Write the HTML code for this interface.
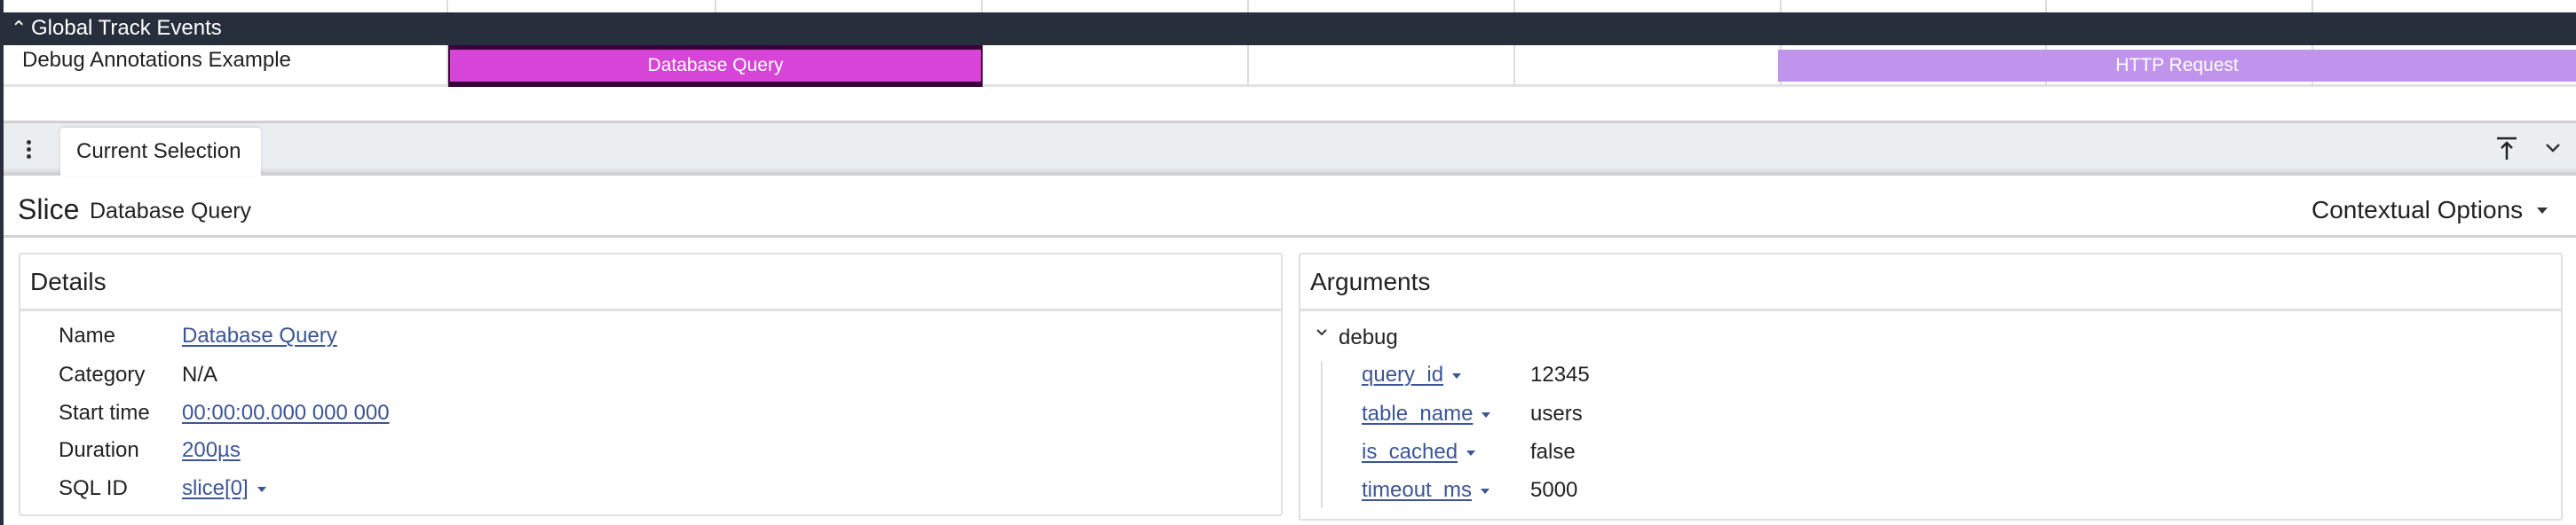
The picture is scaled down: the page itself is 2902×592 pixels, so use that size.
<!DOCTYPE html>
<html><head><meta charset="utf-8"><style>
*{margin:0;padding:0;box-sizing:border-box}
body{width:2902px;height:592px;position:relative;background:#fff;font-family:"Liberation Sans",sans-serif;color:#222;overflow:hidden}
.a{position:absolute;white-space:nowrap}
.gl{position:absolute;width:2px;background:#ddd}
.lk{color:#3b5596;text-decoration:underline;text-decoration-thickness:2px;text-underline-offset:3px}
.tri{display:inline-block;width:0;height:0;border-left:5px solid transparent;border-right:5px solid transparent;border-top:6px solid #3b5596;vertical-align:middle;margin-left:10px}
.lbl{font-size:24px;line-height:30px}
</style></head><body>
<div class="a" style="left:0;top:0;width:4px;height:592px;background:#282f3c"></div>
<!-- grid lines top row -->
<div class="gl" style="left:503px;top:0;height:14px"></div><div class="gl" style="left:805px;top:0;height:14px"></div><div class="gl" style="left:1105px;top:0;height:14px"></div><div class="gl" style="left:1405px;top:0;height:14px"></div><div class="gl" style="left:1705px;top:0;height:14px"></div><div class="gl" style="left:2005px;top:0;height:14px"></div><div class="gl" style="left:2304px;top:0;height:14px"></div><div class="gl" style="left:2604px;top:0;height:14px"></div>
<!-- header -->
<div class="a" style="left:0;top:14px;width:2902px;height:37px;background:#282f3c"></div>
<div class="a" style="left:12px;top:16px;color:#fff;font-size:22px;line-height:32px">&#8963;</div>
<div class="a" style="left:35px;top:17px;color:#fff;font-size:24px;line-height:30px">Global Track Events</div>
<!-- track row -->
<div class="a" style="left:4px;top:51px;width:2898px;height:47px;background:#fff;border-bottom:3px solid #e2e2e2"></div>
<div class="gl" style="left:503px;top:51px;height:46px"></div><div class="gl" style="left:805px;top:51px;height:46px"></div><div class="gl" style="left:1105px;top:51px;height:46px"></div><div class="gl" style="left:1405px;top:51px;height:46px"></div><div class="gl" style="left:1705px;top:51px;height:46px"></div><div class="gl" style="left:2005px;top:51px;height:46px"></div><div class="gl" style="left:2304px;top:51px;height:46px"></div><div class="gl" style="left:2604px;top:51px;height:46px"></div>
<div class="a" style="left:25px;top:53px;font-size:24px;line-height:30px;color:#222">Debug Annotations Example</div>
<div class="a" style="left:505px;top:51px;width:602px;height:47px;background:#d744d8;border:solid #3a003a;border-width:5px 2px 6px 2px;color:#fff;font-size:21px;text-align:center;line-height:36px">Database Query</div>
<div class="a" style="left:2003px;top:56px;width:899px;height:36px;background:#c093ec;color:#fff;font-size:21px;text-align:center;line-height:36px">HTTP Request</div>
<!-- toolbar -->
<div class="a" style="left:4px;top:136px;width:2898px;height:62px;background:#ebeef0;border-top:3px solid #d0d0d0;border-bottom:3px solid #cfcfcf;box-shadow:inset 0 -6px 6px -4px rgba(0,0,0,.12)"></div>
<div class="a" style="left:30px;top:158px;width:5px;height:5px;border-radius:50%;background:#333;box-shadow:0 8px 0 #333,0 16px 0 #333"></div>
<div class="a" style="left:68px;top:144px;width:226px;height:54px;background:#fff;border-radius:4px 4px 0 0;box-shadow:0 -1px 3px rgba(0,0,0,.15)"></div>
<div class="a" style="left:86px;top:156px;font-size:24px;line-height:30px;color:#222">Current Selection</div>
<svg class="a" style="left:2810px;top:152px" width="30" height="32"><path d="M3 4h22M14 28V9M8 15l6-6 6 6" stroke="#222" stroke-width="2.5" fill="none"/></svg>
<svg class="a" style="left:2866px;top:160px" width="20" height="14"><path d="M3 3l7 7 7-7" stroke="#333" stroke-width="2.5" fill="none"/></svg>
<!-- slice header -->
<div class="a" style="left:20px;top:216px;font-size:32px;line-height:40px">Slice</div>
<div class="a" style="left:101px;top:222px;font-size:25px;line-height:32px">Database Query</div>
<div class="a" style="left:2604px;top:219px;font-size:28px;line-height:36px">Contextual Options</div>
<div class="a" style="left:2858px;top:234px;border-left:6px solid transparent;border-right:6px solid transparent;border-top:7px solid #333"></div>
<div class="a" style="left:4px;top:265px;width:2898px;height:3px;background:#d2d2d2"></div>
<!-- details card -->
<div class="a" style="left:21px;top:285px;width:1424px;height:297px;border:2px solid #e0e0e0;border-radius:3px"></div>
<div class="a" style="left:21px;top:348px;width:1424px;height:3px;background:#e0e0e0"></div>
<div class="a" style="left:34px;top:301px;font-size:28px;line-height:34px">Details</div>
<div class="a lbl" style="left:66px;top:364px">Name</div><div class="a lbl lk" style="left:205px;top:364px">Database Query</div>
<div class="a lbl" style="left:66px;top:408px">Category</div><div class="a lbl" style="left:205px;top:408px">N/A</div>
<div class="a lbl" style="left:66px;top:451px">Start time</div><div class="a lbl lk" style="left:205px;top:451px">00:00:00.000 000 000</div>
<div class="a lbl" style="left:66px;top:493px">Duration</div><div class="a lbl lk" style="left:205px;top:493px">200µs</div>
<div class="a lbl" style="left:66px;top:536px">SQL ID</div><div class="a lbl" style="left:205px;top:536px"><span class="lk">slice[0]</span><span class="tri"></span></div>
<!-- arguments card -->
<div class="a" style="left:1463px;top:285px;width:1424px;height:302px;border:2px solid #e0e0e0;border-radius:3px"></div>
<div class="a" style="left:1463px;top:348px;width:1424px;height:3px;background:#e0e0e0"></div>
<div class="a" style="left:1476px;top:301px;font-size:28px;line-height:34px">Arguments</div>
<svg class="a" style="left:1483px;top:370px" width="12" height="10"><path d="M1 2l5 5 5-5" stroke="#333" stroke-width="2" fill="none"/></svg>
<div class="a lbl" style="left:1508px;top:366px">debug</div>
<div class="a" style="left:1488px;top:407px;width:2px;height:166px;background:#ddd"></div>
<div class="a lbl" style="left:1534px;top:408px"><span class="lk">query_id</span><span class="tri"></span></div><div class="a lbl" style="left:1724px;top:408px">12345</div>
<div class="a lbl" style="left:1534px;top:452px"><span class="lk">table_name</span><span class="tri"></span></div><div class="a lbl" style="left:1724px;top:452px">users</div>
<div class="a lbl" style="left:1534px;top:495px"><span class="lk">is_cached</span><span class="tri"></span></div><div class="a lbl" style="left:1724px;top:495px">false</div>
<div class="a lbl" style="left:1534px;top:538px"><span class="lk">timeout_ms</span><span class="tri"></span></div><div class="a lbl" style="left:1724px;top:538px">5000</div>
</body></html>
